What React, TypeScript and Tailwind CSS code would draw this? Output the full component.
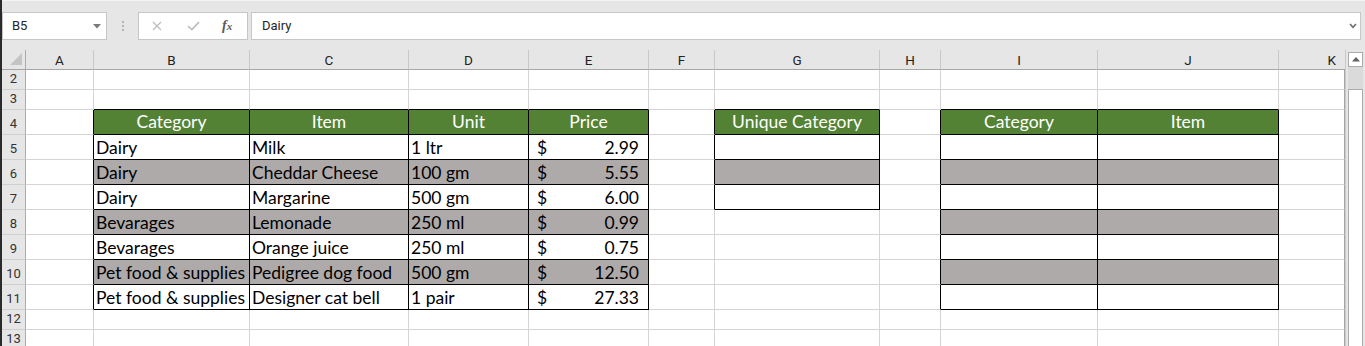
import React from 'react';

const COL_LETTERS = ['A', 'B', 'C', 'D', 'E', 'F', 'G', 'H', 'I', 'J', 'K'];
const COL_W = [
  'w-[68px]', 'w-[156px]', 'w-[159px]', 'w-[120px]', 'w-[120px]', 'w-[66px]',
  'w-[165px]', 'w-[61px]', 'w-[157px]', 'w-[181px]', 'w-[66px]',
];
const ROWS = [2, 3, 4, 5, 6, 7, 8, 9, 10, 11, 12, 13];

const T1: string[][] = [
  ['Dairy', 'Milk', '1 ltr', '2.99'],
  ['Dairy', 'Cheddar Cheese', '100 gm', '5.55'],
  ['Dairy', 'Margarine', '500 gm', '6.00'],
  ['Bevarages', 'Lemonade', '250 ml', '0.99'],
  ['Bevarages', 'Orange juice', '250 ml', '0.75'],
  ['Pet food & supplies', 'Pedigree dog food', '500 gm', '12.50'],
  ['Pet food & supplies', 'Designer cat bell', '1 pair', '27.33'],
];

const HEADERS: Record<number, string> = {
  1: 'Category',
  2: 'Item',
  3: 'Unit',
  4: 'Price',
  6: 'Unique Category',
  8: 'Category',
  9: 'Item',
};

function inTable(c: number, r: number): boolean {
  if (r < 4) return false;
  if (c >= 1 && c <= 4 && r <= 11) return true;
  if (c === 6 && r <= 7) return true;
  if ((c === 8 || c === 9) && r <= 11) return true;
  return false;
}

function Cell({ c, r }: { c: number; r: number }) {
  const t = inTable(c, r);
  const h = r >= 4 && r <= 11 ? 'h-[25px]' : 'h-[20px]';
  const rb =
    c === 10
      ? 'border-r-[#a6a6a6]'
      : t || inTable(c + 1, r)
      ? 'border-r-black'
      : 'border-r-[#d4d4d4]';
  const bb = t || inTable(c, r + 1) ? 'border-b-black' : 'border-b-[#d4d4d4]';
  let bg = 'bg-white';
  if (t && r === 4) bg = 'bg-[#548235]';
  else if (t && r % 2 === 0) bg = 'bg-[#aeaaaa]';

  let content: React.ReactNode = null;
  if (t && r === 4 && HEADERS[c]) {
    content = (
      <div className="w-full text-center text-white leading-[20px] pb-[2px] whitespace-nowrap">
        {HEADERS[c]}
      </div>
    );
  } else if (t && c >= 1 && c <= 3 && r >= 5) {
    content = (
      <div className="pl-[2px] leading-[20px] pb-[1px] whitespace-nowrap text-black">
        {T1[r - 5][c - 1]}
      </div>
    );
  } else if (t && c === 4 && r >= 5) {
    content = (
      <div className="flex w-full justify-between pl-[8px] pr-[9px] leading-[20px] pb-[1px] text-black">
        <span>$</span>
        <span>{T1[r - 5][3]}</span>
      </div>
    );
  }

  return (
    <div
      className={`${COL_W[c]} ${h} shrink-0 border-r border-b ${rb} ${bb} ${bg} flex items-end overflow-hidden font-['Lato',_sans-serif] text-[17.5px]`}
    >
      {content}
    </div>
  );
}

function FormulaBar() {
  return (
    <div className="h-[50px] shrink-0 flex flex-col">
      <div className="h-[1px] bg-[#f3f3f3]" />
      <div className="flex items-start pt-[11px] font-['Roboto',_sans-serif] text-[13px] text-[#262626]">
        {/* Name box */}
        <div className="w-[105px] h-[28px] border border-[#c6c6c6] bg-white flex items-center justify-between pl-[9px] pr-[5px]">
          <span>B5</span>
          <svg width="8" height="5" viewBox="0 0 8 5">
            <polygon points="0,0 8,0 4,4.5" fill="#7a7a7a" />
          </svg>
        </div>
        {/* dots */}
        <div className="w-[31px] h-[28px] flex flex-col items-center justify-center gap-[2px]">
          <div className="w-[2px] h-[2px] bg-[#b4b4b4]" />
          <div className="w-[2px] h-[2px] bg-[#b4b4b4]" />
          <div className="w-[2px] h-[2px] bg-[#b4b4b4]" />
        </div>
        {/* fx box */}
        <div className="w-[110px] h-[28px] border border-[#c6c6c6] bg-white flex items-center pl-[13px]">
          <svg width="10" height="10" viewBox="0 0 10 10">
            <path d="M1 1 L9 9 M9 1 L1 9" stroke="#bdbdbd" strokeWidth="1.3" fill="none" />
          </svg>
          <svg className="ml-[25px]" width="13" height="10" viewBox="0 0 13 10">
            <path d="M1 5 L4.8 8.6 L12 1.2" stroke="#bdbdbd" strokeWidth="1.7" fill="none" />
          </svg>
          <span className="ml-[22px] font-['Liberation_Serif',_serif] italic font-bold text-[14px] text-[#5a5a5a] leading-none">
            f<span className="text-[11px]">x</span>
          </span>
        </div>
        {/* formula input */}
        <div className="flex-1 ml-[3px] mr-[4px] h-[28px] border border-[#c6c6c6] bg-white flex items-center justify-between pl-[10px] pr-[3px]">
          <span>Dairy</span>
          <svg width="8" height="6" viewBox="0 0 8 6">
            <path d="M1 1 L4 4.3 L7 1" stroke="#6d6d6d" strokeWidth="1.6" fill="none" />
          </svg>
        </div>
      </div>
    </div>
  );
}

function Sheet() {
  return (
    <div className="flex flex-col w-[1343px] shrink-0">
      {/* column headers */}
      <div className="flex">
        <div className="w-[24px] h-[20px] shrink-0 bg-[#e6e6e6] border-r border-b border-r-[#ababab] border-b-[#a6a6a6] relative">
          <svg className="absolute left-0 top-0" width="23" height="19" viewBox="0 0 23 19">
            <polygon points="8,15 20,3 20,15" fill="#c4c4c4" />
          </svg>
        </div>
        {COL_LETTERS.map((l, i) => (
          <div
            key={l}
            className={`${COL_W[i]} h-[20px] shrink-0 bg-[#e6e6e6] border-b border-b-[#a6a6a6] ${
              i === 10 ? '' : 'border-r border-r-[#c8c8c8]'
            } flex items-center justify-center ${i === 10 ? 'justify-end pr-[9px]' : ''} font-['Roboto',_sans-serif] text-[13.5px] text-[#222] leading-none pt-[2px]`}
          >
            {l}
          </div>
        ))}
      </div>
      {ROWS.map((r) => (
        <div key={r} className="flex">
          <div
            className={`w-[24px] ${
              r >= 4 && r <= 11 ? 'h-[25px]' : 'h-[20px]'
            } shrink-0 bg-[#e6e6e6] border-r border-b border-r-[#ababab] border-b-[#d0d0d0] flex items-end justify-center pb-[3px] font-['Roboto',_sans-serif] text-[13px] text-[#333] leading-[14px]`}
          >
            {r}
          </div>
          {COL_LETTERS.map((_, c) => (
            <Cell key={c} c={c} r={r} />
          ))}
        </div>
      ))}
    </div>
  );
}

function ScrollBar() {
  return (
    <div className="w-[20px] shrink-0 flex flex-col bg-[#e6e6e6] border-l border-l-[#c8c8c8]">
      <div className="ml-[2px] mt-[2px] w-[15px] h-[15px] border border-[#ababab] bg-white flex items-center justify-center">
        <svg width="8" height="5" viewBox="0 0 8 5">
          <polygon points="4,0 8,4.5 0,4.5" fill="#606060" />
        </svg>
      </div>
      <div className="ml-[2px] w-[15px] h-[22px] bg-[#dadada]" />
      <div className="ml-[2px] w-[15px] flex-1 bg-white border border-[#ababab] border-b-0" />
    </div>
  );
}

export default function App() {
  return (
    <div className="w-[1365px] h-[346px] overflow-hidden bg-[#e6e6e6] border-l-2 border-l-[#2b2b2b] flex flex-col">
      <FormulaBar />
      <div className="flex flex-1 min-h-0">
        <Sheet />
        <ScrollBar />
      </div>
    </div>
  );
}
